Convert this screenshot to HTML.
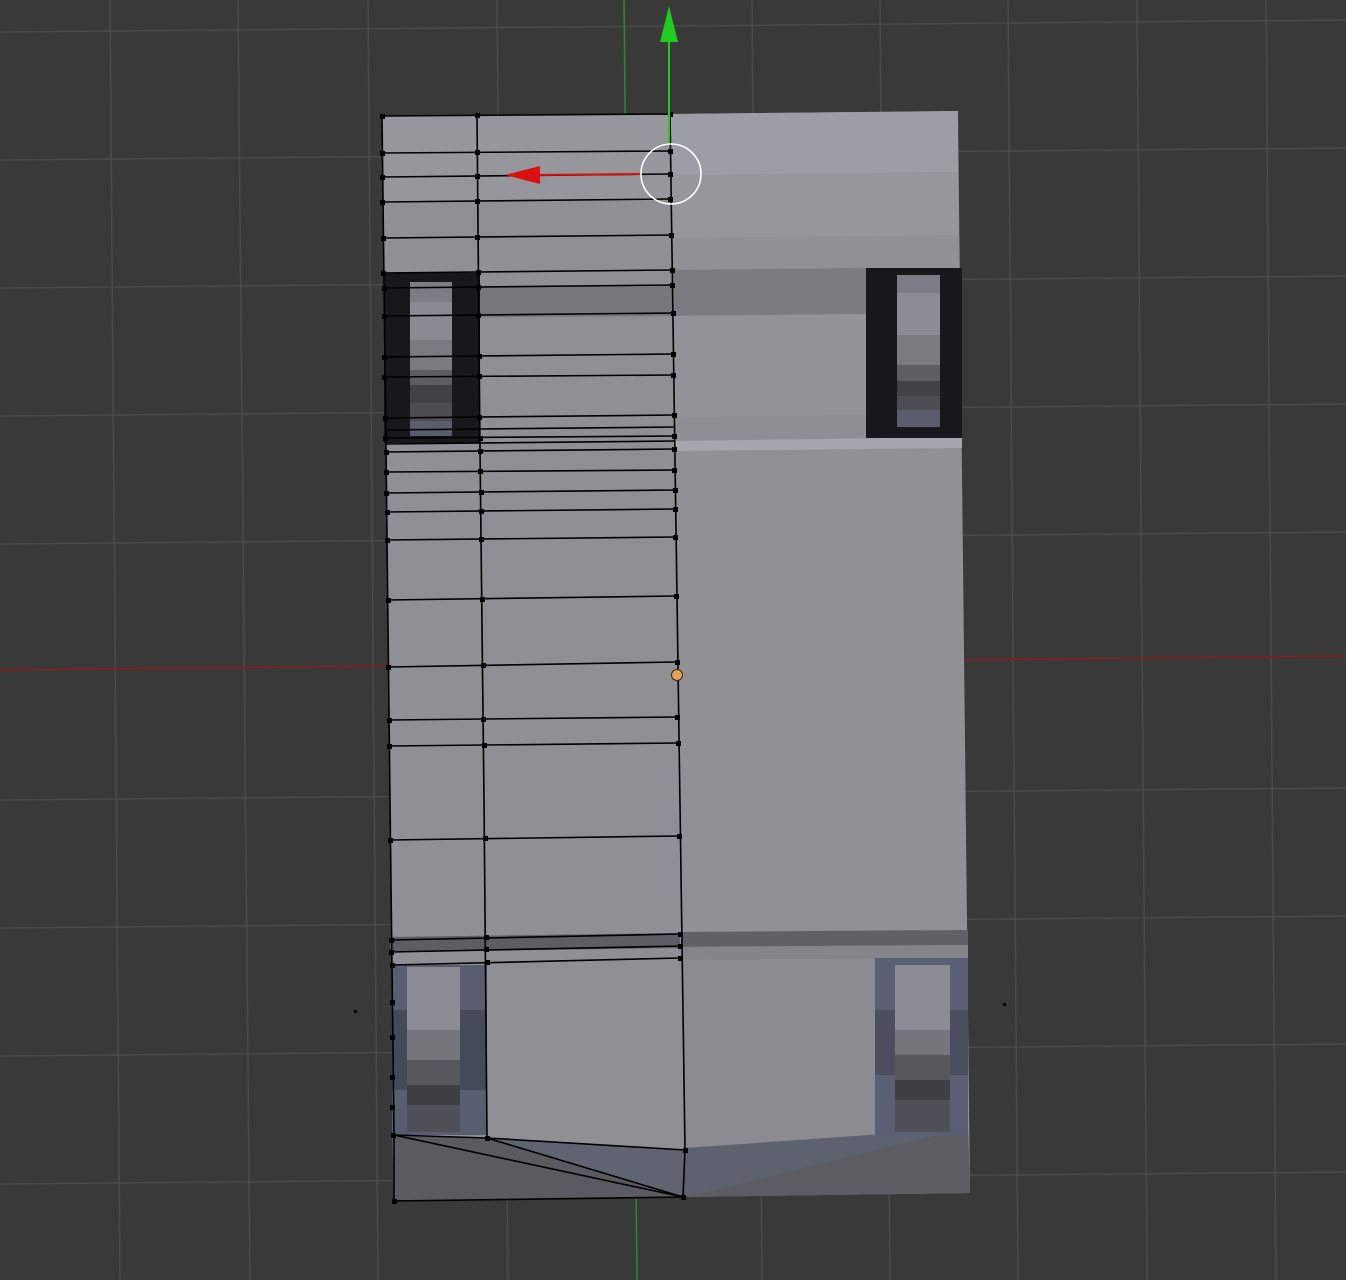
<!DOCTYPE html>
<html><head><meta charset="utf-8"><style>
html,body{margin:0;padding:0;background:#393939;width:1346px;height:1280px;overflow:hidden}
svg{display:block}
</style></head><body>
<svg width="1346" height="1280" viewBox="0 0 1346 1280" xmlns="http://www.w3.org/2000/svg">
<rect width="1346" height="1280" fill="#393939"/>
<g stroke="#4b4b4b" stroke-width="1.5">
<line x1="110" y1="0" x2="120" y2="1280"/>
<line x1="238" y1="0" x2="250" y2="1280"/>
<line x1="368" y1="0" x2="378" y2="1280"/>
<line x1="497" y1="0" x2="508" y2="1280"/>
<line x1="752" y1="0" x2="762" y2="1280"/>
<line x1="880" y1="0" x2="890" y2="1280"/>
<line x1="1008" y1="0" x2="1018" y2="1280"/>
<line x1="1137" y1="0" x2="1147" y2="1280"/>
<line x1="1266" y1="0" x2="1276" y2="1280"/>
<line x1="0" y1="32" x2="1346" y2="20"/>
<line x1="0" y1="160" x2="1346" y2="148"/>
<line x1="0" y1="288" x2="1346" y2="276"/>
<line x1="0" y1="416" x2="1346" y2="404"/>
<line x1="0" y1="544" x2="1346" y2="532"/>
<line x1="0" y1="800" x2="1346" y2="788"/>
<line x1="0" y1="928" x2="1346" y2="916"/>
<line x1="0" y1="1056" x2="1346" y2="1044"/>
<line x1="0" y1="1184" x2="1346" y2="1172"/>
</g>
<line x1="624" y1="0" x2="637" y2="1280" stroke="#2e8a2e" stroke-width="1.5"/>
<line x1="0" y1="670" x2="1346" y2="656" stroke="#8a1c1c" stroke-width="1.5"/>

<!-- right face -->
<polygon points="670,114 958,111 970,1193 685,1197" fill="#909096"/>
<polygon points="670,114 958,111 958,172 670,175" fill="#9d9da5"/>
<polygon points="670,175 958,172 958,235 670,238" fill="#96969c"/>
<polygon points="670,270 866,268 866,314 670,316" fill="#7b7b81"/>
<polygon points="670,316 866,314 866,415 670,417" fill="#929298"/>
<polygon points="670,417 866,415 866,438 672,441" fill="#8e8e94"/>
<polygon points="672,441 962,437 962,448 672,451" fill="#a6a6ae"/>
<polygon points="678,932 968,930 968,945 678,947" fill="#606066"/>
<polygon points="678,947 968,945 968,958 678,960" fill="#84848a"/>
<polygon points="680,960 968,958 968,1130 685,1148" fill="#8b8b91"/>
<polygon points="685,1148 968,1128 970,1193 685,1197" fill="#5d626e"/>
<polygon points="685,1197 968,1128 970,1193" fill="#5c5c62"/>

<!-- left face -->
<polygon points="382,116 670,114 685,1197 394,1201" fill="#8f9095"/>
<polygon points="382,116 670,114 671,200 383,202" fill="#96969c"/>
<polygon points="384,287 673,285 673,316 384,318" fill="#77777d"/>
<polygon points="390,937 680,933 680,948 390,952" fill="#5d5d63"/>
<polygon points="392,1135 487,1138 685,1150 685,1197 394,1201" fill="#5a5a60"/>
<polygon points="487,1138 685,1150 683,1197" fill="#5f6470"/>

<!-- windows top -->
<rect x="384" y="273" width="96" height="170" fill="#16181c"/>
<rect x="410" y="282" width="42" height="154" fill="#8a8a92"/>
<rect x="410" y="282" width="42" height="20" fill="#7c7c86"/>
<rect x="410" y="340" width="42" height="30" fill="#7a7a80"/>
<rect x="410" y="370" width="42" height="30" fill="#5e5e62"/>
<rect x="410" y="385" width="42" height="18" fill="#424246"/>
<rect x="410" y="403" width="42" height="18" fill="#4c4c52"/>
<rect x="410" y="421" width="42" height="15" fill="#5a5e6c"/>
<rect x="866" y="268" width="96" height="170" fill="#16181c"/>
<rect x="897" y="275" width="43" height="152" fill="#8c8c94"/>
<rect x="897" y="275" width="43" height="18" fill="#7c7c86"/>
<rect x="897" y="335" width="43" height="30" fill="#7a7a80"/>
<rect x="897" y="365" width="43" height="16" fill="#5e5e62"/>
<rect x="897" y="381" width="43" height="15" fill="#424246"/>
<rect x="897" y="396" width="43" height="14" fill="#4c4c52"/>
<rect x="897" y="410" width="43" height="17" fill="#5a5e6c"/>
<!-- windows bottom -->
<rect x="392" y="965" width="95" height="170" fill="#585e70"/>
<rect x="392" y="1010" width="95" height="80" fill="#444a5a"/>
<rect x="407" y="967" width="53" height="165" fill="#8c8c94"/>
<rect x="407" y="1030" width="53" height="30" fill="#76767c"/>
<rect x="407" y="1060" width="53" height="25" fill="#58585c"/>
<rect x="407" y="1085" width="53" height="20" fill="#404044"/>
<rect x="407" y="1105" width="53" height="27" fill="#4e5058"/>
<rect x="875" y="958" width="93" height="177" fill="#5a6074"/>
<rect x="875" y="1010" width="93" height="65" fill="#4a4e5e"/>
<rect x="895" y="965" width="55" height="167" fill="#8c8c94"/>
<rect x="895" y="1030" width="55" height="25" fill="#76767c"/>
<rect x="895" y="1055" width="55" height="25" fill="#58585c"/>
<rect x="895" y="1080" width="55" height="20" fill="#404044"/>
<rect x="895" y="1100" width="55" height="32" fill="#4e5058"/>

<!-- mesh edges -->
<g stroke="#000" stroke-width="1.6" fill="none">
<polyline points="382,116 386,450 390,800 394,1135 394,1201 683,1197 685,1150 670,114 382,116"/>
<polyline points="477,116 480,450 484,800 487,1138"/>
<line x1="382" y1="153" x2="670" y2="151"/>
<line x1="382" y1="177" x2="670" y2="174"/>
<line x1="382" y1="202" x2="671" y2="199"/>
<line x1="383" y1="238" x2="671" y2="235"/>
<line x1="383" y1="273" x2="672" y2="270"/>
<line x1="384" y1="288" x2="672" y2="285"/>
<line x1="384" y1="316" x2="673" y2="313"/>
<line x1="384" y1="357" x2="673" y2="354"/>
<line x1="384" y1="377" x2="673" y2="375"/>
<line x1="385" y1="418" x2="674" y2="415"/>
<line x1="385" y1="430" x2="674" y2="427"/>
<line x1="385" y1="438" x2="674" y2="436"/>
<line x1="385" y1="444" x2="674" y2="441"/>
<line x1="386" y1="452" x2="674" y2="449"/>
<line x1="386" y1="472" x2="674" y2="470"/>
<line x1="386" y1="493" x2="675" y2="490"/>
<line x1="387" y1="512" x2="675" y2="509"/>
<line x1="387" y1="540" x2="675" y2="537"/>
<line x1="388" y1="600" x2="676" y2="596"/>
<line x1="388" y1="667" x2="677" y2="662"/>
<line x1="389" y1="720" x2="677" y2="717"/>
<line x1="389" y1="746" x2="678" y2="743"/>
<line x1="390" y1="840" x2="679" y2="836"/>
<line x1="391" y1="940" x2="680" y2="934"/>
<line x1="391" y1="952" x2="680" y2="946"/>
<line x1="392" y1="965" x2="680" y2="958"/>
<line x1="394" y1="1135" x2="487" y2="1138"/>
<line x1="487" y1="1138" x2="685" y2="1150"/>
<line x1="394" y1="1135" x2="683" y2="1197"/>
<line x1="487" y1="1138" x2="683" y2="1197"/>
</g>
<g fill="#000">
<rect x="380" y="114" width="5" height="5"/><rect x="475" y="113" width="5" height="5"/><rect x="668" y="112" width="5" height="5"/>
<rect x="380" y="151" width="5" height="5"/><rect x="475" y="150" width="5" height="5"/><rect x="668" y="149" width="5" height="5"/>
<rect x="380" y="175" width="5" height="5"/><rect x="475" y="174" width="5" height="5"/><rect x="668" y="172" width="5" height="5"/>
<rect x="380" y="200" width="5" height="5"/><rect x="475" y="199" width="5" height="5"/><rect x="668" y="197" width="5" height="5"/>
<rect x="381" y="236" width="5" height="5"/><rect x="475" y="235" width="5" height="5"/><rect x="669" y="233" width="5" height="5"/>
<rect x="381" y="271" width="5" height="5"/><rect x="476" y="270" width="5" height="5"/><rect x="670" y="268" width="5" height="5"/>
<rect x="382" y="286" width="5" height="5"/><rect x="476" y="285" width="5" height="5"/><rect x="670" y="283" width="5" height="5"/>
<rect x="382" y="314" width="5" height="5"/><rect x="476" y="313" width="5" height="5"/><rect x="671" y="311" width="5" height="5"/>
<rect x="382" y="355" width="5" height="5"/><rect x="477" y="354" width="5" height="5"/><rect x="671" y="352" width="5" height="5"/>
<rect x="382" y="375" width="5" height="5"/><rect x="477" y="374" width="5" height="5"/><rect x="671" y="373" width="5" height="5"/>
<rect x="383" y="416" width="5" height="5"/><rect x="477" y="415" width="5" height="5"/><rect x="672" y="413" width="5" height="5"/>
<rect x="383" y="436" width="5" height="5"/><rect x="478" y="436" width="5" height="5"/><rect x="672" y="434" width="5" height="5"/>
<rect x="384" y="450" width="5" height="5"/><rect x="478" y="449" width="5" height="5"/><rect x="672" y="447" width="5" height="5"/>
<rect x="384" y="470" width="5" height="5"/><rect x="478" y="469" width="5" height="5"/><rect x="672" y="468" width="5" height="5"/>
<rect x="384" y="491" width="5" height="5"/><rect x="479" y="490" width="5" height="5"/><rect x="673" y="488" width="5" height="5"/>
<rect x="385" y="510" width="5" height="5"/><rect x="479" y="509" width="5" height="5"/><rect x="673" y="507" width="5" height="5"/>
<rect x="385" y="538" width="5" height="5"/><rect x="479" y="537" width="5" height="5"/><rect x="673" y="535" width="5" height="5"/>
<rect x="386" y="598" width="5" height="5"/><rect x="480" y="597" width="5" height="5"/><rect x="674" y="594" width="5" height="5"/>
<rect x="386" y="665" width="5" height="5"/><rect x="481" y="663" width="5" height="5"/><rect x="675" y="660" width="5" height="5"/>
<rect x="387" y="718" width="5" height="5"/><rect x="481" y="717" width="5" height="5"/><rect x="675" y="715" width="5" height="5"/>
<rect x="387" y="744" width="5" height="5"/><rect x="482" y="743" width="5" height="5"/><rect x="676" y="741" width="5" height="5"/>
<rect x="388" y="838" width="5" height="5"/><rect x="483" y="836" width="5" height="5"/><rect x="677" y="834" width="5" height="5"/>
<rect x="389" y="938" width="5" height="5"/><rect x="484" y="935" width="5" height="5"/><rect x="678" y="932" width="5" height="5"/>
<rect x="389" y="950" width="5" height="5"/><rect x="484" y="947" width="5" height="5"/><rect x="678" y="944" width="5" height="5"/>
<rect x="390" y="963" width="5" height="5"/><rect x="485" y="960" width="5" height="5"/><rect x="678" y="956" width="5" height="5"/>
<rect x="390" y="1000" width="5" height="5"/><rect x="390" y="1035" width="5" height="5"/><rect x="390" y="1075" width="5" height="5"/>
<rect x="390" y="1105" width="5" height="5"/><rect x="391" y="1133" width="5" height="5"/><rect x="485" y="1136" width="5" height="5"/>
<rect x="683" y="1148" width="5" height="5"/><rect x="392" y="1199" width="5" height="5"/><rect x="681" y="1195" width="5" height="5"/>
<rect x="354" y="1010" width="3" height="3"/><rect x="1003" y="1003" width="3" height="3"/>
</g>
<!-- gizmo -->
<line x1="669" y1="40" x2="669" y2="145" stroke="#1fcc1f" stroke-width="2"/>
<polygon points="669,6 660,42 678,42" fill="#1fcc1f"/>
<line x1="641" y1="174" x2="535" y2="175" stroke="#dd1010" stroke-width="2"/>
<polygon points="505,175 540,166 540,184" fill="#dd1010"/>
<circle cx="671" cy="174" r="30" fill="none" stroke="#fff" stroke-width="1.6"/>
<circle cx="677" cy="675" r="5.5" fill="#e3a15a" stroke="#3a2a10" stroke-width="1"/>
</svg>
</body></html>
